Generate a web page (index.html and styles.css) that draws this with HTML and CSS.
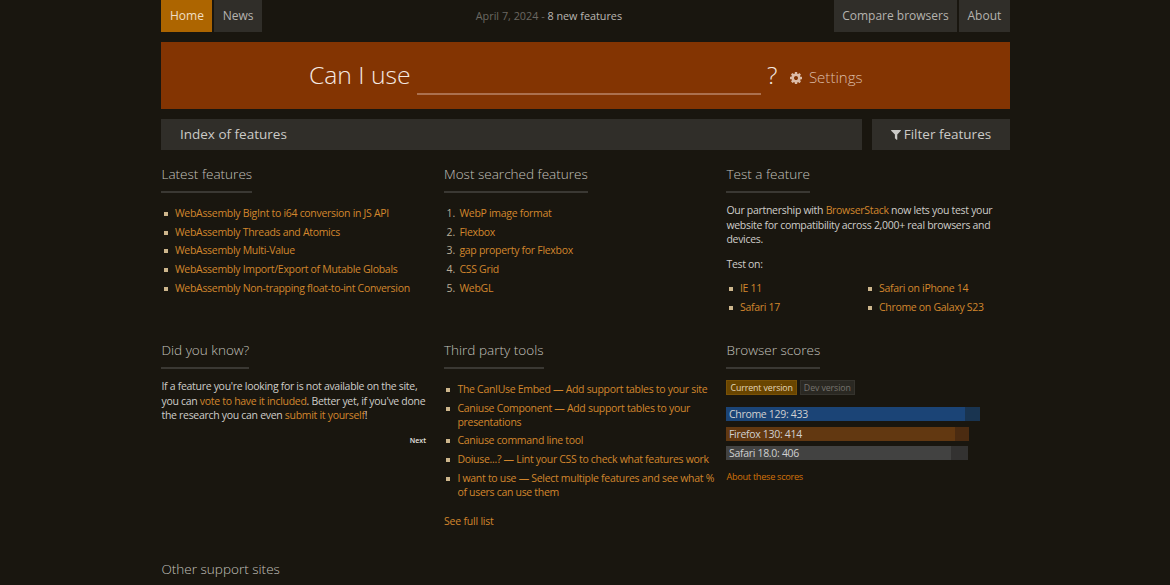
FILE: index.html
```
<!DOCTYPE html>
<html lang="en">
<head>
  <meta charset="UTF-8">
  <meta name="viewport" content="width=device-width, initial-scale=1.0">
  <title>Can I use... Support tables for HTML5, CSS3, etc</title>
  <link rel="stylesheet" href="styles.css">
</head>
<body>
  <div class="page">
    <header class="topbar">
      <nav class="tabs">
        <a class="tab tab-home active" href="#">Home</a>
        <a class="tab tab-news" href="#">News</a>
      </nav>
      <div class="update">April 7, 2024 - <a href="#">8 new features</a></div>
      <nav class="tabs">
        <a class="tab tab-compare" href="#">Compare browsers</a>
        <a class="tab tab-about" href="#">About</a>
      </nav>
    </header>

    <form class="search">
      <label class="search-label" for="feature">Can I use</label>
      <input class="search-input" id="feature" type="text" autocomplete="off">
      <span class="search-mark">?</span>
      <a class="settings" href="#">
        <svg class="icon-gear" viewBox="0 0 1536 1536"><path fill="currentColor" d="M1024 768q0-106-75-181t-181-75-181 75-75 181 75 181 181 75 181-75 75-181zm512-109v222q0 12-8 23t-20 13l-185 28q-19 54-39 91 35 50 107 138 10 12 10 25t-9 23q-27 37-99 108t-94 71q-12 0-26-9l-138-108q-44 23-91 38-16 136-29 186-7 28-36 28H657q-14 0-24.500-8.500T621 1506l-28-184q-49-16-90-37l-141 107q-10 9-25 9-14 0-25-11-126-114-165-168-7-10-7-23 0-12 8-23 15-21 51-66.500t54-70.500q-27-50-41-99L29 913q-13-2-21-12.500T0 877V655q0-12 8-23t19-13l186-28q14-46 39-92-40-57-107-138-10-12-10-24 0-10 9-23 26-36 98.500-107.500T337 135q13 0 26 10l138 107q44-23 91-38 16-136 29-186 7-28 36-28h222q14 0 24.500 8.500T915 30l28 184q49 16 90 37l142-107q9-9 24-9 13 0 25 10 129 119 165 170 7 8 7 22 0 12-8 23-15 21-51 66.500t-54 70.500q26 50 41 98l183 28q13 2 21 12.500t8 23.500z"/></svg>
        <span>Settings</span>
      </a>
    </form>

    <div class="toolbar">
      <a class="toolbar-index" href="#">Index of features</a>
      <a class="toolbar-filter" href="#">
        <svg class="icon-filter" viewBox="0 0 11 11"><path fill="currentColor" d="M.4 0h10.200q.6.300.2.900L6.900 4.900v5.600q-.2.600-.7.300L4.300 9.200V4.900L.200.900Q-.200.300.4 0z"/></svg>
        <span>Filter features</span>
      </a>
    </div>

    <main class="grid">
      <section class="block">
        <h2>Latest features</h2>
        <ul class="list">
          <li><a href="#">WebAssembly BigInt to i64 conversion in JS API</a></li>
          <li><a href="#">WebAssembly Threads and Atomics</a></li>
          <li><a href="#">WebAssembly Multi-Value</a></li>
          <li><a href="#">WebAssembly Import/Export of Mutable Globals</a></li>
          <li><a href="#">WebAssembly Non-trapping float-to-int Conversion</a></li>
        </ul>
      </section>

      <section class="block">
        <h2>Most searched features</h2>
        <ol class="list numbered">
          <li><a href="#">WebP image format</a></li>
          <li><a href="#">Flexbox</a></li>
          <li><a href="#">gap property for Flexbox</a></li>
          <li><a href="#">CSS Grid</a></li>
          <li><a href="#">WebGL</a></li>
        </ol>
      </section>

      <section class="block">
        <h2>Test a feature</h2>
        <p>Our partnership with <a href="#">BrowserStack</a> now lets you test your website for compatibility across 2,000+ real browsers and devices.</p>
        <p>Test on:</p>
        <ul class="list two-cols">
          <li><a href="#">IE 11</a></li>
          <li><a href="#">Safari on iPhone 14</a></li>
          <li><a href="#">Safari 17</a></li>
          <li><a href="#">Chrome on Galaxy S23</a></li>
        </ul>
      </section>

      <section class="block">
        <h2>Did you know?</h2>
        <p>If a feature you're looking for is not available on the site, you can <a href="#">vote to have it included</a>. Better yet, if you've done the research you can even <a href="#">submit it yourself</a>!</p>
        <button class="next" type="button">Next</button>
      </section>

      <section class="block">
        <h2>Third party tools</h2>
        <ul class="list tools">
          <li><a href="#">The CanIUse Embed — Add support tables to your site</a></li>
          <li><a href="#">Caniuse Component — Add support tables to your presentations</a></li>
          <li><a href="#">Caniuse command line tool</a></li>
          <li><a href="#">Doiuse...? — Lint your CSS to check what features work</a></li>
          <li><a href="#">I want to use — Select multiple features and see what % of users can use them</a></li>
        </ul>
        <a class="more" href="#">See full list</a>
      </section>

      <section class="block">
        <h2>Browser scores</h2>
        <div class="versions">
          <button class="version selected" type="button">Current version</button>
          <button class="version" type="button">Dev version</button>
        </div>
        <div class="score chrome" style="width: 254px"><span style="width: 239px">Chrome 129: 433</span></div>
        <div class="score firefox" style="width: 242.500px"><span style="width: 228.500px">Firefox 130: 414</span></div>
        <div class="score safari" style="width: 241.500px"><span style="width: 224.500px">Safari 18.0: 406</span></div>
        <a class="about-scores" href="#">About these scores</a>
      </section>

      <section class="block">
        <h2>Other support sites</h2>
      </section>
    </main>
  </div>
</body>
</html>
```

FILE: styles.css
```
* {
  box-sizing: border-box;
}

html {
  height: 100%;
  overflow: hidden;
}

body {
  margin: 0;
  height: 100%;
  overflow: hidden;
  font-family: "Open Sans", sans-serif;
  font-size: 10.5px;
  line-height: 14.7px;
  color: #cfcdc9;
  background-color: #19160f;
}

a {
  color: #d2862d;
  text-decoration: none;
}

.page {
  width: 848.500px;
  height: 585px;
  margin-left: 161.450px;
  overflow: hidden;
}

/* top navigation */
.topbar {
  display: flex;
  justify-content: space-between;
  height: 32px;
}

.tabs {
  display: flex;
  gap: 2px;
}

.tab {
  height: 32px;
  line-height: 31px;
  font-size: 12px;
  text-align: center;
  color: #b5b3af;
  background-color: #302e29;
}

.tab-home {
  width: 51px;
}

.tab-news {
  width: 47.500px;
}

.tab-compare {
  width: 123px;
}

.tab-about {
  width: 51px;
}

.tab.active {
  color: #f0dfc4;
  background-color: #ad6500;
}

.update {
  padding-left: 2px;
  line-height: 32px;
  font-size: 10.8px;
  color: #6b6862;
}

.update a {
  color: #b9b7b2;
}

/* search box */
.search {
  display: flex;
  height: 67px;
  margin: 10px 0;
  padding-left: 147.500px;
  background-color: #833402;
}

.search-label,
.search-mark {
  font-size: 24.7px;
  font-weight: 300;
  line-height: 65px;
  color: #f5eae2;
}

.search-label {
  width: 108px;
}

.search-input {
  width: 344px;
  height: 53px;
  padding: 0;
  border: 0;
  border-bottom: 2px solid #ac704e;
  background: transparent;
  outline: none;
}

.search-mark {
  margin-left: 6px;
  width: 23px;
}

.settings {
  display: flex;
  align-items: center;
  gap: 7px;
  height: 71px;
  font-size: 15px;
  font-weight: 300;
  color: #dcbca7;
}

.icon-gear {
  width: 12px;
  height: 12px;
}

/* index and filter buttons */
.toolbar {
  display: flex;
  gap: 9.500px;
  height: 31px;
  line-height: 31px;
  font-size: 13.5px;
}

.toolbar a {
  color: #cbcac7;
  background-color: #302e29;
}

.toolbar-index {
  flex: 1;
  padding-left: 18.500px;
}

.toolbar-filter {
  display: flex;
  align-items: center;
  justify-content: center;
  gap: 3px;
  width: 138px;
}

.icon-filter {
  flex: none;
  width: 10px;
  height: 10px;
}

/* home page blocks */
.grid {
  display: grid;
  grid-template-columns: 282.500px 282.500px 283.500px;
  grid-template-rows: 176px 219px 60px;
  padding-top: 11px;
  letter-spacing: -0.3px;
}

.block {
  padding-right: 11px;
}

h2 {
  width: fit-content;
  height: 32px;
  margin: 0 0 10px;
  font-size: 13.55px;
  font-weight: 300;
  line-height: 26px;
  letter-spacing: 0;
  color: #c3c1bc;
  border-bottom: 2px solid #3a3833;
}

p {
  margin: 0 0 10px;
}

.list {
  margin: 0;
  padding: 0 0 0 13.500px;
  list-style: none;
}

.list li {
  margin-bottom: 4.700px;
  line-height: 14px;
}

.list li::before {
  content: "";
  display: inline-block;
  width: 4px;
  height: 4px;
  margin-left: -11px;
  margin-right: 7px;
  vertical-align: 1px;
  background-color: #cdb68c;
}

h2 + .list {
  padding-top: 3px;
}

.numbered {
  padding-left: 15.500px;
  counter-reset: item;
}

.numbered li {
  counter-increment: item;
}

.numbered li::before {
  content: counter(item) ".";
  width: 13px;
  height: auto;
  margin-left: -13px;
  margin-right: 0;
  vertical-align: baseline;
  letter-spacing: 0;
  color: #b9ad96;
  background: none;
}

.two-cols {
  display: grid;
  grid-template-columns: 139px 1fr;
  margin-top: -1px;
}

.next {
  display: block;
  margin: 13px 7px 0 auto;
  padding: 0;
  border: 0;
  font: 600 7px/9px "Open Sans", sans-serif;
  color: #e6e4e0;
  background: none;
}

.tools {
  margin-right: -4px;
}

.more {
  display: block;
  margin-top: 15px;
  letter-spacing: -0.2px;
}

.versions {
  display: flex;
  gap: 3px;
  padding-top: 1px;
  margin-bottom: 12px;
}

.version {
  height: 15px;
  padding: 0 3px;
  border: 1px solid #35332d;
  font: 8.8px/12px "Open Sans", sans-serif;
  letter-spacing: -0.1px;
  color: #75726d;
  background-color: #2a2822;
}

.version.selected {
  border-color: #795106;
  color: #e3d6b9;
  background-color: #694500;
}

.score {
  height: 14px;
  margin-bottom: 5.600px;
}

.score span {
  display: block;
  height: 14px;
  padding-left: 2.500px;
  line-height: 14px;
  color: #d0d0d0;
}

.chrome {
  background-color: #193450;
}

.chrome span {
  background-color: #1b4476;
}

.firefox {
  background-color: #4b2b11;
}

.firefox span {
  background-color: #623811;
}

.safari {
  background-color: #333231;
}

.safari span {
  background-color: #424241;
}

.about-scores {
  display: block;
  margin-top: 10px;
  font-size: 9.2px;
  color: #d27209;
}
```
